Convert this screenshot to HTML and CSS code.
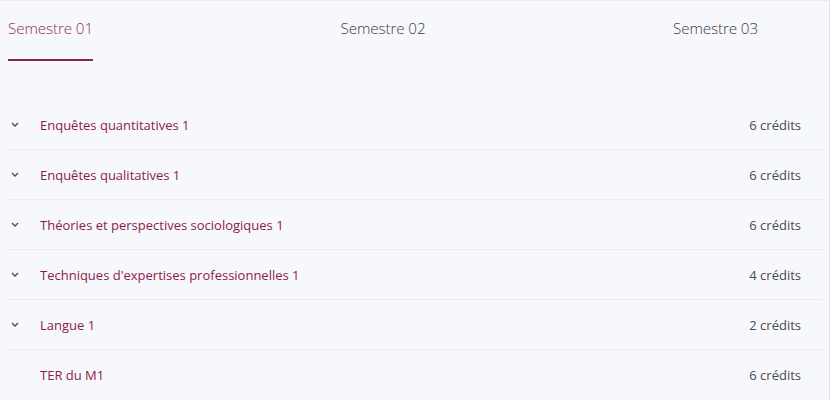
FILE: index.html
```html
<!DOCTYPE html>
<html lang="fr">
<head>
<meta charset="utf-8">
<link rel="stylesheet" href="styles.css">
</head>
<body>
<div class="panel">
  <nav class="tabs">
    <div class="tab active"><span class="tab-label">Semestre 01</span></div>
    <div class="tab"><span class="tab-label">Semestre 02</span></div>
    <div class="tab"><span class="tab-label">Semestre 03</span></div>
  </nav>
  <ul class="list">
    <li class="row"><span class="chev"><svg width="8" height="5" viewBox="0 0 8 5"><path d="M1 1l3 3 3-3" fill="none" stroke="#4a4a4f" stroke-width="1.3"/></svg></span><span class="title">Enquêtes quantitatives 1</span><span class="credits">6 crédits</span></li>
    <li class="row"><span class="chev"><svg width="8" height="5" viewBox="0 0 8 5"><path d="M1 1l3 3 3-3" fill="none" stroke="#4a4a4f" stroke-width="1.3"/></svg></span><span class="title">Enquêtes qualitatives 1</span><span class="credits">6 crédits</span></li>
    <li class="row"><span class="chev"><svg width="8" height="5" viewBox="0 0 8 5"><path d="M1 1l3 3 3-3" fill="none" stroke="#4a4a4f" stroke-width="1.3"/></svg></span><span class="title">Théories et perspectives sociologiques 1</span><span class="credits">6 crédits</span></li>
    <li class="row"><span class="chev"><svg width="8" height="5" viewBox="0 0 8 5"><path d="M1 1l3 3 3-3" fill="none" stroke="#4a4a4f" stroke-width="1.3"/></svg></span><span class="title">Techniques d'expertises professionnelles 1</span><span class="credits">4 crédits</span></li>
    <li class="row"><span class="chev"><svg width="8" height="5" viewBox="0 0 8 5"><path d="M1 1l3 3 3-3" fill="none" stroke="#4a4a4f" stroke-width="1.3"/></svg></span><span class="title">Langue 1</span><span class="credits">2 crédits</span></li>
    <li class="row last"><span class="chev"></span><span class="title">TER du M1</span><span class="credits">6 crédits</span></li>
  </ul>
</div>
</body>
</html>
```
FILE: styles.css
```css
html, body {
  margin: 0;
  padding: 0;
  background: #f7f8fb;
}
body {
  font-family: "Open Sans", "Liberation Sans", sans-serif;
  width: 830px;
  height: 400px;
  overflow: hidden;
}
.panel {
  box-sizing: border-box;
  width: 830px;
  height: 400px;
  border-top: 1px solid #e9eaee;
  border-right: 1px solid #e4e6ea;
  padding: 0 7px 0 8px;
}
.tabs {
  display: flex;
  height: 60px;
}
.tab {
  flex: 0 0 332.5px;
  display: flex;
  align-items: flex-start;
}
.tab:last-child {
  flex: 0 0 auto;
}
.tab-label {
  display: block;
  padding-top: 17px;
  font-size: 15.2px;
  font-weight: 300;
  color: #3a3b40;
  line-height: 20px;
  letter-spacing: -0.1px;
}
.tab.active .tab-label {
  color: #8e2f57;
  border-bottom: 2px solid #8e2448;
  height: 60px;
  box-sizing: border-box;
}
.list {
  list-style: none;
  margin: 39px 0 0 0;
  padding: 0;
}
.row {
  display: flex;
  align-items: center;
  height: 50px;
  border-bottom: 1px solid #eaebef;
  box-sizing: border-box;
  font-size: 13px;
  padding-right: 21px;
}
.row.last {
  border-bottom: none;
}
.chev {
  box-sizing: border-box;
  width: 32px;
  padding-left: 3px;
  display: flex;
  align-items: center;
}
.title {
  flex: 1;
  color: #8b1b4d;
  letter-spacing: 0;
}
.credits {
  color: #4a4b52;
  letter-spacing: 0;
}
```
